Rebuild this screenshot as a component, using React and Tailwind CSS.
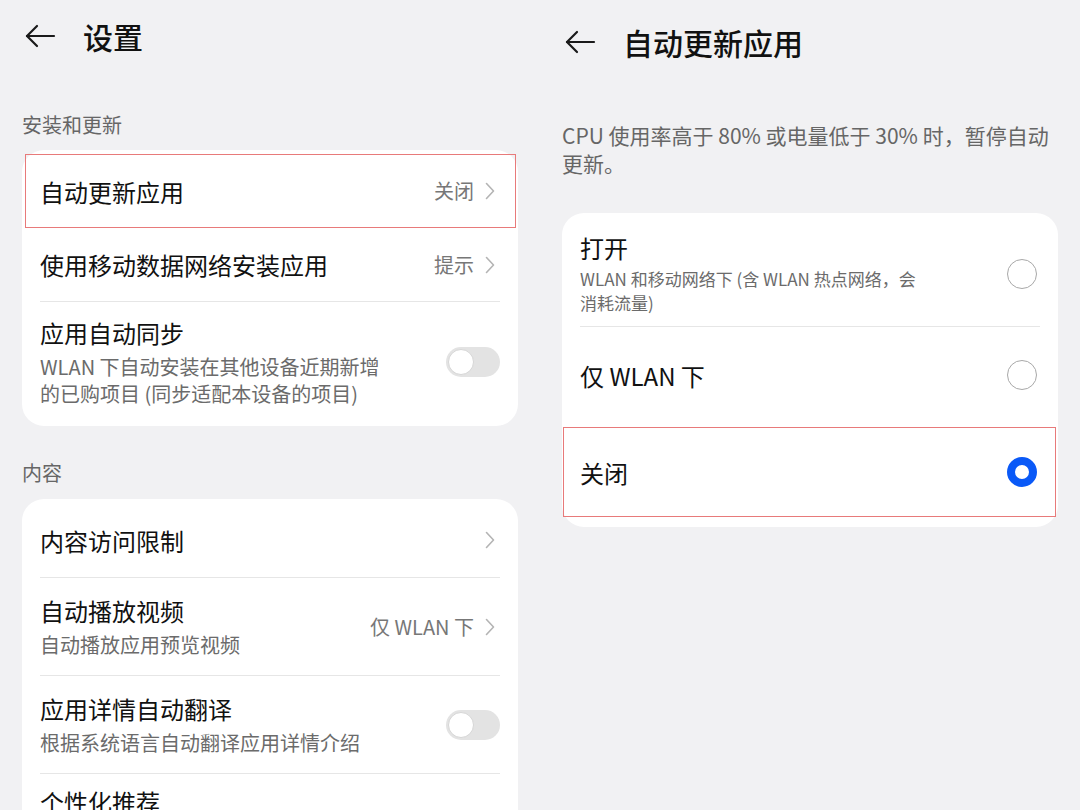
import React from "react";

const FONT = { fontFamily: '"Noto Sans CJK SC", "Noto Sans", sans-serif' };

function BackArrow() {
  return (
    <svg width="32" height="24" viewBox="0 0 32 24" fill="none" stroke="#1a1a1a" strokeWidth="2.2" strokeLinecap="round" strokeLinejoin="round">
      <path d="M30 12H3" />
      <path d="M13 2L3 12l10 10" />
    </svg>
  );
}

function Chevron() {
  return (
    <svg width="10" height="18" viewBox="0 0 10 18" fill="none" stroke="#b4b4b4" strokeWidth="1.6" strokeLinecap="round" strokeLinejoin="round">
      <path d="M1.5 1.5L8.5 9l-7 7.5" />
    </svg>
  );
}

function Toggle() {
  return (
    <div className="w-[54px] h-[30px] rounded-full bg-[#e3e3e3] flex items-center px-[2px] shrink-0">
      <div className="w-[26px] h-[26px] rounded-full bg-white border border-[#d6d6d6]" />
    </div>
  );
}

function Radio({ checked }) {
  if (checked) {
    return <div className="w-[30px] h-[30px] rounded-full border-[8px] border-[#0a59f7] bg-white shrink-0" />;
  }
  return <div className="w-[30px] h-[30px] rounded-full border-[1.5px] border-[#a8a8a8] bg-white shrink-0" />;
}

function Divider() {
  return <div className="mx-[18px] h-px bg-[#e6e6e6]" />;
}

function Header({ title, offset }) {
  return (
    <div className={`flex items-center gap-[27px] pl-[24px] ${offset}`}>
      <BackArrow />
      <span className="text-[30px] font-medium text-[#111] leading-none">{title}</span>
    </div>
  );
}

function Row({ title, sub, subWidth = "max-w-[362px]", value, chevron, toggle, highlight, className = "" }) {
  return (
    <div className={`relative flex justify-between px-[18px] ${className}`}>
      {highlight && <div className="absolute inset-y-0 left-[3px] right-[2px] border border-[#e87a7a]" />}
      <div className="flex flex-col">
        <span className="text-[24px] leading-[31px] text-[#111]">{title}</span>
        {sub && <span className={`mt-[5px] text-[20px] leading-[27px] text-[#6b6b6b] ${subWidth}`}>{sub}</span>}
      </div>
      <div className="flex items-center gap-[11px] shrink-0">
        {value && <span className="text-[20px] text-[#777]">{value}</span>}
        {chevron && (
          <span className="mr-[5px] flex">
            <Chevron />
          </span>
        )}
        {toggle && <Toggle />}
      </div>
    </div>
  );
}

function RadioRow({ title, sub, checked, highlight, className = "" }) {
  return (
    <div className={`relative flex items-center justify-between pl-[18px] pr-[21px] ${className}`}>
      {highlight && <div className="absolute inset-y-0 left-[1px] right-[2px] border border-[#e87a7a]" />}
      <div className="flex flex-col">
        <span className="text-[24px] leading-[31px] text-[#111]">{title}</span>
        {sub && <span className="mt-[4px] text-[17px] leading-[24px] text-[#6b6b6b] max-w-[342px]">{sub}</span>}
      </div>
      <Radio checked={checked} />
    </div>
  );
}

export default function App() {
  return (
    <div style={FONT} className="w-[1080px] h-[810px] bg-[#f1f1f3] flex overflow-hidden">
      {/* Left panel */}
      <div className="w-[540px] flex flex-col">
        <Header title="设置" offset="mt-[21px]" />
        <div className="px-[22px]">
          <div className="mt-[60px] text-[20px] leading-[28px] text-[#666]">安装和更新</div>
          <div className="mt-[11px] bg-white rounded-[22px] py-[4px]">
            <Row title="自动更新应用" value="关闭" chevron highlight className="items-center h-[74px]" />
            <Row title="使用移动数据网络安装应用" value="提示" chevron className="items-center h-[73px]" />
            <Divider />
            <Row
              title="应用自动同步"
              sub="WLAN 下自动安装在其他设备近期新增的已购项目 (同步适配本设备的项目)"
              subWidth="max-w-[350px]"
              toggle
              className="items-center py-[15px]"
            />
          </div>
          <div className="mt-[33px] text-[20px] leading-[28px] text-[#666]">内容</div>
          <div className="mt-[12px] bg-white rounded-[22px] py-[4px]">
            <Row title="内容访问限制" chevron className="items-center h-[74px]" />
            <Divider />
            <Row title="自动播放视频" sub="自动播放应用预览视频" value="仅 WLAN 下" chevron className="items-center h-[97px]" />
            <Divider />
            <Row title="应用详情自动翻译" sub="根据系统语言自动翻译应用详情介绍" toggle className="items-center h-[97px]" />
            <Divider />
            <Row title="个性化推荐" className="items-start pt-[12px] h-[74px]" />
          </div>
        </div>
      </div>

      {/* Right panel */}
      <div className="w-[540px] flex flex-col">
        <Header title="自动更新应用" offset="mt-[27px]" />
        <div className="px-[22px]">
          <div className="mt-[64px] text-[21px] leading-[28px] text-[#666]">
            CPU 使用率高于 80% 或电量低于 30% 时，暂停自动更新。
          </div>
          <div className="mt-[36px] bg-white rounded-[22px] py-[4px]">
            <RadioRow
              title="打开"
              sub="WLAN 和移动网络下 (含 WLAN 热点网络，会消耗流量)"
              className="pt-[15px] pb-[11px]"
            />
            <Divider />
            <RadioRow title="仅 WLAN 下" className="h-[96px]" />
            <div className="h-[4px]" />
            <RadioRow title="关闭" checked highlight className="h-[90px]" />
            <div className="h-[6px]" />
          </div>
        </div>
      </div>
    </div>
  );
}
